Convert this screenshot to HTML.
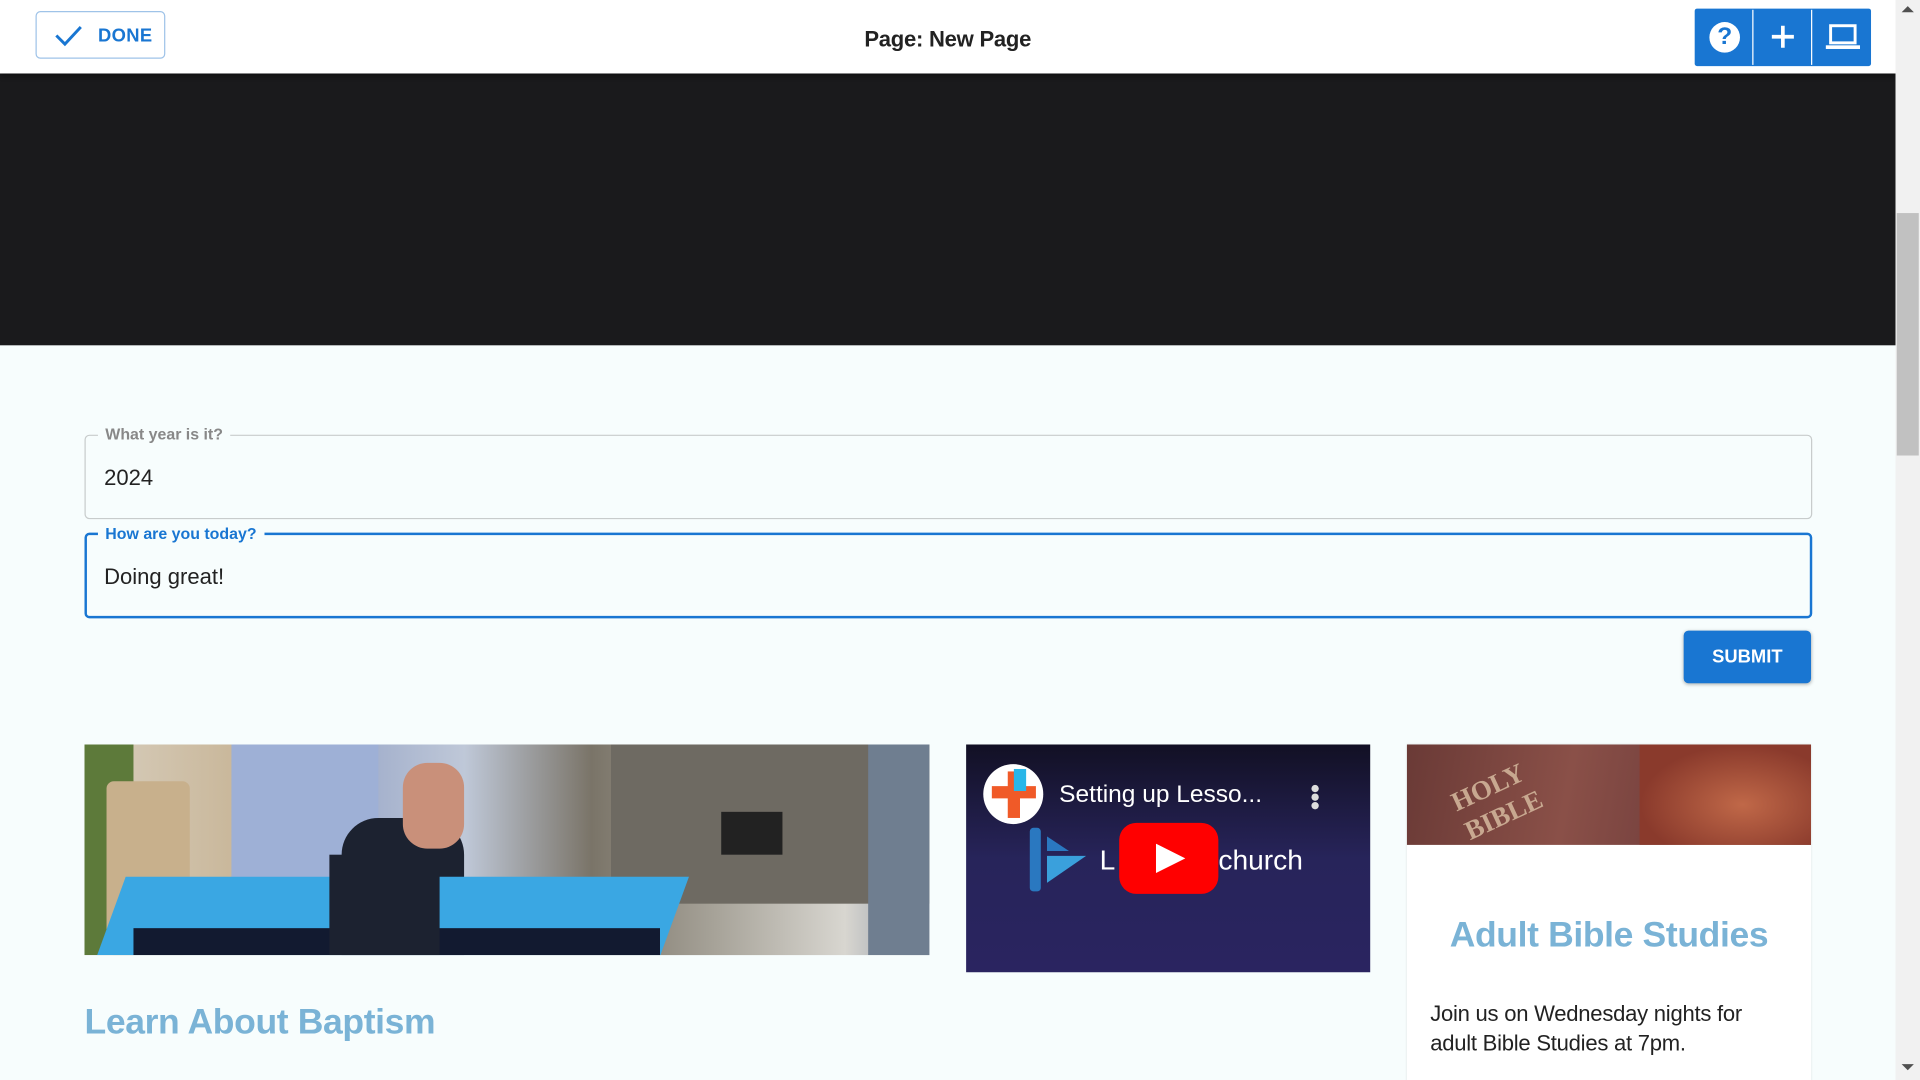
<!DOCTYPE html>
<html><head><meta charset="utf-8"><style>
html,body{margin:0;padding:0;overflow:hidden;width:1920px;height:1080px;background:#f7fdfd}
#s{position:absolute;left:0;top:0;width:1568px;height:882px;transform:scale(1.22449);transform-origin:0 0;font-family:"Liberation Sans",Arial,sans-serif;background:#f7fdfd;overflow:hidden}
.a{position:absolute}
</style></head><body><div id="s">
<div class="a" style="left:0;top:60px;width:1548px;height:222px;background:#1a1a1c"></div>
<div class="a" style="left:0;top:0;width:1548px;height:60px;background:#fff;box-shadow:0 2px 4px rgba(0,0,0,.4)"></div>
<div class="a" style="left:29px;top:9px;width:104px;height:37px;border:1px solid #9fc3e8;border-radius:4px;color:#1976d2;font-size:15px;font-weight:bold;letter-spacing:.3px">
<svg class="a" style="left:14px;top:9px" width="24" height="20" viewBox="0 0 24 20"><path d="M2 10 L9 17 L22 3" fill="none" stroke="#1976d2" stroke-width="2.4"/></svg>
<span class="a" style="left:50px;top:11px">DONE</span></div>
<div class="a" style="left:0;width:1548px;top:22px;text-align:center;font-size:18px;font-weight:bold;color:#222;letter-spacing:-.2px">Page: New Page</div>
<div class="a" style="left:1384px;top:7px;width:144px;height:47px;background:#1976d2;border-radius:2px"></div>
<div class="a" style="left:1431px;top:8px;width:1px;height:45px;background:#fff"></div>
<div class="a" style="left:1479px;top:8px;width:1px;height:45px;background:#fff"></div>
<div class="a" style="left:1396px;top:18px;width:25px;height:25px;border-radius:50%;background:#fff;color:#1976d2;font-weight:bold;font-size:20px;text-align:center;line-height:25px">?</div>
<svg class="a" style="left:1446px;top:20px" width="20" height="20"><path d="M10 1V19M1 10H19" stroke="#fff" stroke-width="3"/></svg>
<svg class="a" style="left:1491px;top:19px" width="28" height="22"><rect x="4" y="2" width="20" height="14" fill="none" stroke="#fff" stroke-width="2.4"/><rect x="0" y="18" width="28" height="3" fill="#fff"/></svg>
<div class="a" style="left:1548px;top:0;width:20px;height:882px;background:#f1f1f1"></div>
<div class="a" style="left:1549px;top:174px;width:18px;height:198px;background:#c1c1c1"></div>
<div class="a" style="left:1553px;top:5px;border:5px solid transparent;border-bottom:5px solid #505050;border-top:0"></div>
<div class="a" style="left:1553px;top:869px;border:5px solid transparent;border-top:5px solid #505050;border-bottom:0"></div>

<div class="a" style="left:69px;top:355px;width:1409px;height:67px;border:1px solid #c8cccc;border-radius:4px"></div>
<div class="a" style="left:80px;top:347px;padding:0 6px;background:#f7fdfd;color:#888;font-size:13px;font-weight:bold">What year is it?</div>
<div class="a" style="left:85px;top:380px;font-size:18px;color:#222">2024</div>
<div class="a" style="left:69px;top:435px;width:1407px;height:66px;border:2px solid #1976d2;border-radius:4px"></div>
<div class="a" style="left:80px;top:428px;padding:0 6px;background:#f7fdfd;color:#1976d2;font-size:13px;font-weight:bold">How are you today?</div>
<div class="a" style="left:85px;top:461px;font-size:18px;color:#222">Doing great!</div>
<div class="a" style="left:1375px;top:515px;width:104px;height:43px;background:#1976d2;border-radius:4px;color:#fff;font-weight:bold;font-size:15px;text-align:center;line-height:43px;box-shadow:0 1px 3px rgba(0,0,0,.3)">SUBMIT</div>

<div class="a" style="left:69px;top:608px;width:690px;height:172px;overflow:hidden;background:linear-gradient(90deg,#d8cfbf 0%,#c9b79a 18%,#9aa8c8 30%,#bfc8d8 45%,#7a7468 60%,#a8a49a 75%,#d8d6d0 90%,#8894a4 100%)">
<div class="a" style="left:0;top:0;width:40px;height:172px;background:#5d7a3a"></div>
<div class="a" style="left:18px;top:30px;width:68px;height:142px;background:#c8b08c;border-radius:6px"></div>
<div class="a" style="left:120px;top:0;width:120px;height:140px;background:#9eb0d6"></div>
<div class="a" style="left:430px;top:0;width:260px;height:130px;background:#6e6a62"></div>
<div class="a" style="left:640px;top:0;width:50px;height:172px;background:#6f7e90"></div>
<div class="a" style="left:520px;top:55px;width:50px;height:35px;background:#222"></div>
<div class="a" style="left:210px;top:60px;width:100px;height:112px;background:#1c2230;border-radius:30px 30px 0 0"></div>
<div class="a" style="left:260px;top:15px;width:50px;height:70px;background:#c9907a;border-radius:20px"></div>
<div class="a" style="left:22px;top:108px;width:460px;height:64px;background:#3aa7e3;transform:skewX(-20deg)"></div>
<div class="a" style="left:40px;top:150px;width:430px;height:22px;background:#121a30"></div>
<div class="a" style="left:200px;top:90px;width:90px;height:82px;background:#1c2230"></div>
</div>
<div class="a" style="left:69px;top:819px;font-size:29px;font-weight:bold;color:#7ab3d6;letter-spacing:-.3px">Learn About Baptism</div>

<div class="a" style="left:789px;top:608px;width:330px;height:186px;background:linear-gradient(#121024,#27245a 50%,#2a2460)"></div>
<div class="a" style="left:803px;top:624px;width:49px;height:49px;border-radius:50%;background:#fff"></div>
<div class="a" style="left:823px;top:630px;width:10px;height:38px;background:#f05a28"></div>
<div class="a" style="left:810px;top:642px;width:36px;height:10px;background:#f05a28"></div>
<div class="a" style="left:828px;top:628px;width:10px;height:18px;background:#29b6e8"></div>
<div class="a" style="left:865px;top:638px;color:#fff;font-size:20px">Setting up Lesso...</div>
<div class="a" style="left:1071px;top:641px;width:6px;height:6px;border-radius:50%;background:#ddd;box-shadow:0 7px 0 #ddd,0 14px 0 #ddd"></div>
<div class="a" style="left:841px;top:676px;width:9px;height:52px;background:#2a78c0;border-radius:3px"></div>
<svg class="a" style="left:855px;top:683px" width="32" height="40"><path d="M0 0L18 12L0 12Z" fill="#2a78c0"/><path d="M0 16H32L0 38Z" fill="#3aa0dc"/></svg>
<div class="a" style="left:898px;top:689px;color:#fff;font-size:23px">L</div>
<div class="a" style="left:995px;top:689px;color:#fff;font-size:23px">church</div>
<div class="a" style="left:914px;top:672px;width:81px;height:58px;background:#f00;border-radius:14px"></div>
<svg class="a" style="left:944px;top:689px" width="24" height="24"><path d="M0 0L24 12L0 24Z" fill="#fff"/></svg>

<div class="a" style="left:1149px;top:608px;width:330px;height:280px;background:#fff;box-shadow:0 0 2px rgba(0,0,0,.15)"></div>
<div class="a" style="left:1149px;top:608px;width:330px;height:82px;overflow:hidden;background:linear-gradient(100deg,#6a3a36 0%,#8a5048 40%,#7a4440 60%,#a85a44 75%,#7a3a30 100%)">
<div class="a" style="left:40px;top:20px;color:#c8a890;font-family:'Liberation Serif',serif;font-size:22px;font-weight:bold;transform:rotate(-25deg)">HOLY<br>BIBLE</div>
<div class="a" style="left:190px;top:0;width:140px;height:82px;background:radial-gradient(ellipse at 60% 60%,#c06848,#8a3a2c 70%)"></div>
</div>
<div class="a" style="left:1149px;top:748px;width:330px;text-align:center;font-size:29px;font-weight:bold;color:#7ab3d6;letter-spacing:-.3px">Adult Bible Studies</div>
<div class="a" style="left:1168px;top:816px;width:290px;font-size:18px;line-height:24px;color:#222;letter-spacing:-.2px">Join us on Wednesday nights for<br>adult Bible Studies at 7pm.</div>
</div></body></html>
